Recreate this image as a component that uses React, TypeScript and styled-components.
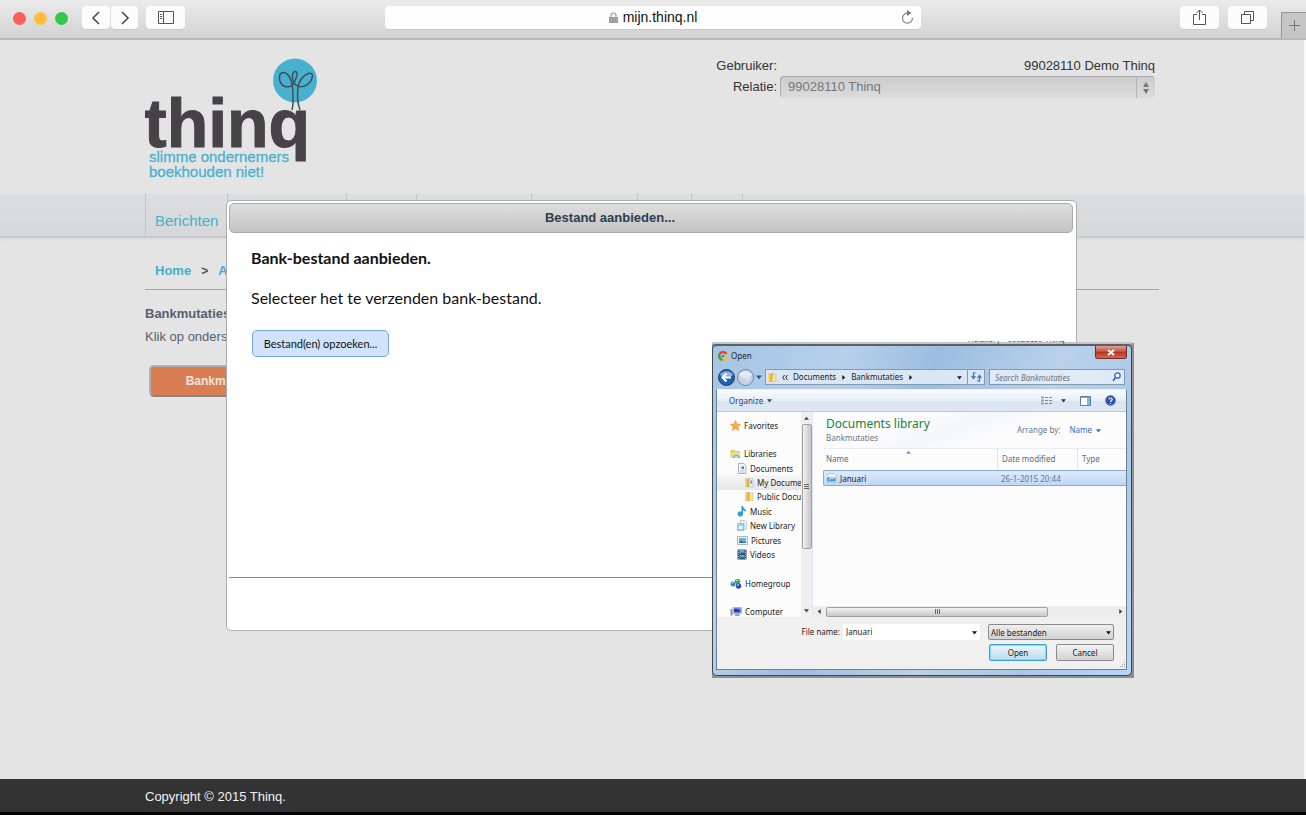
import React from "react";
import styled, { createGlobalStyle } from "styled-components";

const GlobalStyle = createGlobalStyle`
  * { box-sizing: border-box; }
  body { margin: 0; background: #e4e4e4; font-family: "Liberation Sans", Arial, sans-serif; font-size: 13px; color: #333; }
  button, input, select { font: inherit; color: inherit; margin: 0; }
  svg { display: block; flex: none; }
  p, h1, h2, ul { margin: 0; padding: 0; }
  a { text-decoration: none; }
`;

const Screen = styled.div`
  position: relative;
  min-height: 100vh;
  display: flex;
  flex-direction: column;
`;

/* ---------- browser bar ---------- */
const BrowserBar = styled.header`
  height: 40px;
  display: flex;
  align-items: flex-start;
  padding-top: 6px;
  background: linear-gradient(#ebebeb, #d2d2d2);
  border-bottom: 2px solid #b9b9b9;
`;
const BarSide = styled.div<{ $end?: boolean }>`
  flex: 1 1 0;
  display: flex;
  justify-content: ${(p) => (p.$end ? "flex-end" : "flex-start")};
`;
const Lights = styled.div`
  display: flex;
  gap: 8px;
  height: 24px;
  align-items: center;
  margin: 0 14px 0 13px;
`;
const Light = styled.span<{ $color: string }>`
  width: 13px;
  height: 13px;
  border-radius: 50%;
  background: ${(p) => p.$color};
`;
const BarButton = styled.button<{ $w: number; $gap: number }>`
  width: ${(p) => p.$w}px;
  height: 23px;
  margin-right: ${(p) => p.$gap}px;
  padding: 0;
  display: flex;
  align-items: center;
  justify-content: center;
  border: 0;
  border-radius: 4px;
  background: #fcfcfc;
  box-shadow: 0 1px 0 #c9c9c9;
`;
const AddressBar = styled.div`
  flex: 0 1 536px;
  height: 23px;
  display: flex;
  align-items: center;
  border-radius: 4px;
  background: #fdfdfd;
  box-shadow: 0 1px 0 #c9c9c9;
  color: #111;
  padding: 0 7px 0 20px;
`;
const Address = styled.div`
  flex: 1;
  display: flex;
  align-items: center;
  justify-content: center;
  gap: 5px;
  font-size: 14px;
  line-height: 23px;
`;
const IconButton = styled.button`
  display: flex;
  padding: 0;
  border: 0;
  background: none;
`;
const NewTab = styled.button`
  width: 25px;
  height: 26px;
  margin: 6px 0 0 0;
  padding: 0;
  display: flex;
  align-items: center;
  justify-content: center;
  border: 0;
  border-top: 1px solid #969696;
  border-left: 1px solid #969696;
  background: #c6c6c6;
`;

/* ---------- page ---------- */
const Page = styled.div`
  flex: 1;
  background: #e4e4e4;
  border-right: 2px solid #f8f8f8;
`;
const Column = styled.div`
  max-width: 1014px;
  margin: 0 auto;
`;
const Masthead = styled(Column)`
  height: 154px;
  display: flex;
  justify-content: space-between;
  padding: 15px 4px 0 0;
`;
const Account = styled.div`
  display: grid;
  grid-template-columns: auto 375px;
  grid-template-rows: 21px 22px;
  align-content: start;
  column-gap: 3px;
  text-align: right;
  line-height: 22px;
`;
const Relation = styled.div`
  position: relative;
`;
const RelationSelect = styled.select`
  appearance: none;
  display: block;
  width: 100%;
  height: 22px;
  padding: 0 8px;
  border: 0;
  border-radius: 4px;
  background: linear-gradient(#cbcbcb, #dcdcdc);
  box-shadow: inset 1px 1px 1px #ababab;
  color: #777;
`;
const Stepper = styled.span`
  position: absolute;
  top: 1px;
  right: 0;
  width: 19px;
  height: 21px;
  display: flex;
  align-items: center;
  justify-content: center;
  border-left: 1px solid #b4b4b4;
  pointer-events: none;
`;
const Nav = styled.nav`
  height: 44px;
  background: linear-gradient(#dcdedf, #d6d7da);
  border-bottom: 2px solid #c8c9cc;
  box-shadow: 0 1px 2px #d6d6d6;
`;
const NavList = styled.ul`
  display: flex;
  height: 42px;
  list-style: none;
`;
const NavItem = styled.li<{ $w: number }>`
  width: ${(p) => p.$w}px;
  padding: 11px 0 0 9px;
  border-left: 1px solid #c3c5ca;
  font-size: 15px;
  line-height: 32px;
  a { color: #45b2cc; }
`;
const Crumbs = styled.nav`
  height: 52px;
  display: flex;
  gap: 10px;
  padding: 22px 0 0 10px;
  border-bottom: 1px solid #55c2d8;
  font-weight: bold;
  line-height: 22px;
  color: #4a5159;
  a { color: #45aecb; }
  span { font-size: 12px; }
`;
const Intro = styled.div`
  padding-top: 12px;
  line-height: 23px;
  color: #56616e;
`;
const OrangeButton = styled.button`
  width: 152px;
  height: 32px;
  margin: 17px 0 0 4px;
  border: 2px solid #b0b0b0;
  border-bottom-color: #858585;
  border-radius: 5px;
  background: #d97e52;
  color: #eee4df;
  font-size: 12px;
  font-weight: bold;
`;
const Footer = styled.footer`
  height: 36px;
  background: #333;
  border-bottom: 3px solid #000;
  color: #f2f2f2;
  line-height: 36px;
  padding-right: 2px;
`;

/* ---------- upload modal ---------- */
const ModalLayer = styled.div`
  position: absolute;
  top: 200px;
  left: 0;
  right: 3px;
  display: flex;
  justify-content: center;
`;
const Modal = styled.section`
  width: 851px;
  height: 431px;
  padding: 2px 3px 0 2px;
  display: flex;
  flex-direction: column;
  border: 1px solid #adadad;
  border-radius: 5px;
  background: #fff;
  color: #111;
`;
const ModalTitle = styled.h1`
  height: 30px;
  padding-right: 82px;
  border: 1px solid #a9a9a9;
  border-radius: 5px;
  background: linear-gradient(#dedede, #c4c4c4);
  font-size: 13px;
  line-height: 28px;
  text-align: center;
  color: #2c3d50;
`;
const ModalBody = styled.div`
  flex: 1;
  padding: 15px 22px;
  font-family: Lato, sans-serif;
  font-size: 16px;
  line-height: 20px;
  h2 { font-size: 16px; margin-bottom: 20px; }
`;
const PickButton = styled.button`
  width: 137px;
  height: 27px;
  margin: 22px 0 0 1px;
  padding: 0;
  border: 1px solid #7ba6dc;
  border-radius: 5px;
  background: #cfe3fa;
  font-size: 11px;
`;
const ModalFoot = styled.div`
  height: 53px;
  border-top: 1px solid #8e8e8e;
`;

/* ---------- file chooser ---------- */
const ChooserShadow = styled.div`
  position: absolute;
  top: 341px;
  left: calc(50% + 59px);
  width: 422px;
  background: linear-gradient(transparent 2px, #8d8f91 2px);
  padding: 0 2px 2px 0;
  font-family: "Noto Sans", "Open Sans", sans-serif;
  font-size: 8px;
  color: #222;
`;
const BehindText = styled.div`
  height: 3px;
  overflow: hidden;
  display: flex;
  align-items: flex-end;
  gap: 8px;
  padding-left: 256px;
  font: 8px/8px "Liberation Sans", Arial, sans-serif;
  background: linear-gradient(transparent 1px, #c4c4c4 1px);
  color: #444;
`;
const Chooser = styled.section`
  border: 1px solid #3d4852;
  border-top: 2px solid #5a6168;
  border-radius: 5px;
  background: linear-gradient(115deg, #a5c4e4 0%, #b7d0ea 24%, #9dbddf 40%, #b9d1ea 62%, #a9c8e8 80%, #b4d6f8 100%);
  padding: 0 4px 5px 3px;
`;
const Caption = styled.div`
  height: 22px;
  display: flex;
  align-items: flex-start;
  gap: 3px;
  padding-left: 2px;
  line-height: 20px;
  svg { margin-top: 5px; }
  strong { flex: 1; font-weight: normal; }
`;
const CloseButton = styled.button`
  width: 32px;
  height: 13px;
  padding: 0;
  display: flex;
  align-items: center;
  justify-content: center;
  border: 1px solid #6e2c26;
  border-top: 0;
  border-radius: 0 0 3px 3px;
  background: linear-gradient(#dfa093, #c75642 45%, #b8311c 50%, #d06a50);
  && svg { margin: 0; }
`;
const PathRow = styled.div`
  height: 21px;
  display: flex;
  align-items: flex-start;
  gap: 2px;
  padding: 0 2px;
`;
const RoundNav = styled.div`
  display: flex;
  align-items: center;
  gap: 2px;
  height: 18px;
  width: 45px;
`;
const PathBox = styled.div`
  flex: 1;
  height: 16px;
  margin-top: 1px;
  display: flex;
  align-items: center;
  gap: 5px;
  padding-left: 1px;
  border: 1px solid #8499b0;
  background: #d9e6f4;
  > button:last-child { width: 17px; height: 14px; align-items: center; justify-content: center; border-left: 1px solid #8499b0; }
`;
const Spacer = styled.span`
  flex: 1;
`;
const SearchBox = styled.label`
  width: 136px;
  height: 16px;
  margin: 1px 0 0 2px;
  display: flex;
  align-items: center;
  padding: 0 3px 0 5px;
  border: 1px solid #8499b0;
  background: #dfeaf6;
`;
const BareInput = styled.input`
  flex: 1;
  min-width: 0;
  width: 0;
  height: 14px;
  padding: 0;
  border: 0;
  background: none;
  outline: 0;
  &::placeholder { color: #6c7580; font-style: italic; opacity: 1; }
`;
const Client = styled.div`
  border: 1px solid #6d8096;
  border-top-color: #e9f1fa;
  background: #f0f0f0;
`;
const Tools = styled.div`
  height: 22px;
  display: flex;
  align-items: center;
  gap: 14px;
  padding: 0 10px 0 12px;
  border-bottom: 1px solid #b9c8dc;
  background: linear-gradient(#fafcfe, #e6eef8 50%, #d9e4f1 55%, #dfe8f4);
  color: #2b4668;
`;
const TextButton = styled.button`
  display: flex;
  align-items: center;
  gap: 4px;
  padding: 0;
  border: 0;
  background: none;
  line-height: 14px;
`;
const Panes = styled.div`
  height: 205px;
  display: flex;
  background: #fcfcfd;
`;
const Tree = styled.ul`
  width: 84px;
  height: 205px;
  overflow: hidden;
  padding-top: 6px;
  list-style: none;
`;
const TreeGrid = styled.div`
  height: 201px;
  display: grid;
  grid-template-rows: repeat(14, 1fr);
`;
const TreeRow = styled.li<{ $level: number; $row: number; $on?: boolean }>`
  grid-row: ${(p) => p.$row};
  display: flex;
  align-items: center;
  gap: 3px;
  padding-left: ${(p) => 13 + p.$level * 7}px;
  white-space: nowrap;
  overflow: hidden;
  background: ${(p) => (p.$on ? "linear-gradient(#f6f6f6, #e6e6e6)" : "none")};
`;
const VScroll = styled.div`
  width: 12px;
  display: flex;
  flex-direction: column;
  align-items: center;
  justify-content: space-between;
  padding: 4px 0;
  background: #efefef;
  border-right: 1px solid #dbe7f5;
`;
const VThumb = styled.span`
  width: 10px;
  height: 125px;
  margin: 3px 0 auto;
  display: flex;
  align-items: center;
  justify-content: center;
  border: 1px solid #a0a0a0;
  border-radius: 2px;
  background: linear-gradient(90deg, #f2f2f2, #c4c4c4);
`;
const Listing = styled.div`
  flex: 1;
  display: flex;
  flex-direction: column;
  min-width: 0;
`;
const LibraryHead = styled.div`
  height: 36px;
  display: flex;
  justify-content: space-between;
  padding: 4px 25px 0 13px;
  background: linear-gradient(160deg, #fcfcfd 30%, #f3f6fb 45%, #fcfcfd 60%);
  color: #6a7684;
  h2 { font-size: 12px; line-height: 16px; font-weight: normal; color: #21803a; }
  p { line-height: 11px; }
`;
const Arrange = styled.div`
  display: flex;
  align-items: flex-start;
  gap: 9px;
  padding-top: 7px;
  line-height: 14px;
  button { color: #2672c8; }
`;
const Files = styled.table`
  width: calc(100% - 10px);
  margin-left: 10px;
  table-layout: fixed;
  border-collapse: separate;
  border-spacing: 0;
  color: #6b7583;
  th { position: relative; height: 22px; padding: 0 0 3px 4px; text-align: left; font-weight: normal; color: #5b6b80; border-top: 1px solid #e6edf5; }
  th + th { border-left: 1px solid #dde6f0; }
  th:first-child, td:first-child { padding-left: 3px; }
  td { height: 16px; padding: 0 0 0 4px; border: solid #86aadb; border-width: 1px 0; background: linear-gradient(#dfeafb, #bfd7f8); }
  td:first-child { border-left-width: 1px; border-radius: 2px 0 0 2px; }
  th:first-child svg { position: absolute; top: 1px; left: 83px; }
`;
const FileCell = styled.span`
  display: flex;
  align-items: center;
  gap: 3px;
  color: #222;
`;
const HScroll = styled.div`
  height: 11px;
  margin-top: auto;
  display: flex;
  align-items: center;
  padding: 0 3px 0 4px;
  background: #ededed;
`;
const HThumb = styled.span`
  width: 222px;
  height: 10px;
  margin: 0 auto 0 4px;
  display: flex;
  align-items: center;
  justify-content: center;
  border: 1px solid #a0a0a0;
  border-radius: 2px;
  background: linear-gradient(#f2f2f2, #c8c8c8);
`;
const NameForm = styled.form`
  height: 52px;
  display: grid;
  grid-template-columns: 1fr 137px 134px;
  grid-template-rows: 16px 18px;
  row-gap: 4px;
  padding: 7px 12px 0 0;
  line-height: 16px;
  label { text-align: right; padding-right: 3px; }
`;
const NameBox = styled.div`
  display: flex;
  align-items: center;
  padding: 0 3px;
  background: #fff;
`;
const TypePick = styled.div`
  position: relative;
  margin-left: 8px;
  svg { position: absolute; top: 6px; right: 3px; pointer-events: none; }
`;
const TypeSelect = styled.select`
  appearance: none;
  display: block;
  width: 100%;
  height: 16px;
  padding: 0 2px;
  border: 1px solid #8a8a8a;
  border-radius: 2px;
  background: linear-gradient(#efefef, #d2d2d2);
`;
const Actions = styled.div`
  grid-column: 3;
  display: flex;
  justify-content: flex-end;
  gap: 9px;
`;
const DialogButton = styled.button<{ $primary?: boolean }>`
  flex: 0 0 58px;
  height: 17px;
  padding: 0;
  line-height: 13px;
  border: 1px solid ${(p) => (p.$primary ? "#3aa5d1" : "#8a8a8a")};
  border-radius: 2px;
  box-shadow: ${(p) => (p.$primary ? "inset 0 0 0 1px #7fd6f5" : "none")};
  background: ${(p) => (p.$primary ? "linear-gradient(#eaf5fb, #bddcee)" : "linear-gradient(#f2f2f2, #d2d2d2)")};
`;

/* ---------- drawings ---------- */
const Caret = ({ dir = "down", color = "#222", size = 5 }: { dir?: "down" | "up" | "left" | "right"; color?: string; size?: number }) => {
  const d = { down: "M0 2h8L4 7z", up: "M0 6h8L4 1z", left: "M6 0v8L1 4z", right: "M2 0v8l5-4z" }[dir];
  return (
    <svg width={size} height={size} viewBox="0 0 8 8" aria-hidden="true">
      <path d={d} fill={color} />
    </svg>
  );
};

const Logo = () => (
  <svg width="176" height="126" viewBox="0 0 176 126" role="img" aria-label="thinq">
    <circle cx="150" cy="25.500" r="22" fill="#49b1d0" />
    <text x="-1" y="92" fontFamily="Liberation Sans" fontSize="68" fontWeight="bold" fill="#454346" stroke="#454346" strokeWidth="1">thinq</text>
    <text x="4" y="107" fontFamily="Liberation Sans" fontSize="15" fill="#49b1d0" stroke="#49b1d0" strokeWidth="0.300">slimme ondernemers</text>
    <text x="4" y="122" fontFamily="Liberation Sans" fontSize="15" fill="#49b1d0" stroke="#49b1d0" strokeWidth="0.300">boekhouden niet!</text>
    <path
      d="M147 55C149 46 148 38 147.500 31C146 22 142 17 138 17.500C133 18 133.500 27 138 30.500C142 33 148 32 149.500 27C152 22 153 16.500 150.500 16.500C147 16.500 146.500 23 149 28C153 33 160 33 165 27C169 21 168 17.500 163.500 18.500C158 20 154 26 153 32C152 40 152 47 155 55"
      fill="none"
      stroke="#3d5059"
      strokeWidth="1.500"
    />
  </svg>
);

const ChromeIcon = () => (
  <svg width="10" height="10" viewBox="0 0 20 20">
    <circle cx="10" cy="10" r="10" fill="#f2c12e" />
    <path d="M10 10 1.300 5A10 10 0 0 1 18.700 5z" fill="#d9402f" />
    <path d="M10 10 1.300 5A10 10 0 0 0 9 20z" fill="#3f9e48" />
    <circle cx="10" cy="10" r="4.800" fill="#fff" />
    <circle cx="10" cy="10" r="3.700" fill="#4a7fd0" />
  </svg>
);
const FolderIcon = () => (
  <svg width="10" height="11" viewBox="0 0 20 22">
    <path d="M2 2h8v18H2z" fill="#f1d27a" />
    <path d="M6 5l6-4v17l-6 3z" fill="#e3b44a" />
    <path d="M11 4h7v15h-8z" fill="#f7e3a0" stroke="#d6ae50" />
  </svg>
);
const LibraryIcon = () => (
  <svg width="11" height="10" viewBox="0 0 22 20">
    <path d="M1 2h8l2 2h9v13H1z" fill="#e9c765" />
    <path d="M3 6h17v12H3z" fill="#f2d98a" />
    <path d="M6 18c0-8 13-8 15 0z" fill="#4fb0d8" />
    <path d="M9 18h8v-4H9z" fill="#a9def0" />
  </svg>
);
const DocIcon = ({ mark = "#3e78c0" }: { mark?: string }) => (
  <svg width="10" height="11" viewBox="0 0 20 22">
    <path d="M3 1h11l4 4v16H3z" fill="#f1f5fa" stroke="#8b9bb0" strokeWidth="1.500" />
    <path d="M9 7h5v5H9z" fill={mark} />
    <path d="M6 15h9M6 18h9" stroke="#b7c5d6" strokeWidth="1.500" />
  </svg>
);
const MyDocIcon = () => (
  <svg width="10" height="11" viewBox="0 0 20 22">
    <path d="M2 2h8v18H2z" fill="#f0cd6d" />
    <path d="M9 3h9v17H9z" fill="#e4edf5" stroke="#9eb0c4" />
    <path d="M6 5l5-3v17l-5 2z" fill="#d9b052" />
    <path d="M13 7h3v6h-3z" fill="#5b93cb" />
  </svg>
);
const StarIcon = () => (
  <svg width="11" height="11" viewBox="0 0 22 22">
    <path d="M11 1l3 7 7 .6-5.300 5 1.600 7.400L11 17l-6.300 4 1.600-7.400L1 8.600 8 8z" fill="#f9b03c" stroke="#e0852a" />
  </svg>
);
const MusicIcon = () => (
  <svg width="10" height="11" viewBox="0 0 20 22">
    <path d="M9 0h3c0 5 7 6 6 13-1-3-4-4-6-4v7a5.500 5 0 1 1-3-4.500z" fill="#2f9bdc" />
  </svg>
);
const NewLibIcon = () => (
  <svg width="10" height="11" viewBox="0 0 20 22">
    <path d="M6 1h10l3 3v14H6z" fill="#e8f1f9" stroke="#8fa9c4" />
    <path d="M1 7h13v14H1z" fill="#a9cdec" stroke="#6c9fd0" />
    <path d="M4 12h7v6H4z" fill="#e9f5fd" />
  </svg>
);
const PictureIcon = () => (
  <svg width="11" height="9" viewBox="0 0 22 18">
    <path d="M1 1h20v16H1z" fill="#eef3f7" stroke="#92a2b0" strokeWidth="1.500" />
    <path d="M4 4h14v10H4z" fill="#5fb4dc" />
    <path d="M4 14c3-6 6-4 8-2s4-1 6-1v3z" fill="#286a70" />
  </svg>
);
const VideoIcon = () => (
  <svg width="10" height="11" viewBox="0 0 20 22">
    <path d="M1 1h18v20H1z" fill="#3a4552" />
    <path d="M5 2h10v8H5zM5 12h10v8H5z" fill="#53b2e3" />
    <path d="M8 10V5l4 3 3-2v4zM6 20v-5l6 2 3-2v5z" fill="#27618f" />
    <path d="M3 2v19M17 2v19" stroke="#ccd5dd" strokeWidth="1.500" strokeDasharray="2 2" />
  </svg>
);
const HomegroupIcon = () => (
  <svg width="12" height="11" viewBox="0 0 24 22">
    <circle cx="6" cy="12" r="5" fill="#3d83c9" />
    <circle cx="15" cy="7" r="5.500" fill="#48a850" />
    <circle cx="17" cy="16" r="5.500" fill="#2753b4" />
    <path d="M12 5l4-1M4 11l3-2M14 15l4-2" stroke="#d7ecf8" strokeWidth="2" />
  </svg>
);
const ComputerIcon = () => (
  <svg width="12" height="10" viewBox="0 0 24 20">
    <path d="M1 4h4v13H1z" fill="#8d9690" />
    <path d="M6 1h17v12H6z" fill="#cfd6de" stroke="#78838f" />
    <path d="M8 3h13v8H8z" fill="#1d3bc0" />
    <path d="M14 3h7v5z" fill="#6d8bea" />
    <path d="M11 14h7l2 4H9z" fill="#9aa5b1" />
  </svg>
);
const Grip = ({ vertical }: { vertical?: boolean }) => (
  <svg width="5" height="5" viewBox="0 0 5 5">
    <path d={vertical ? "M.5 0v5M2.500 0v5M4.500 0v5" : "M0 .5h5M0 2.500h5M0 4.500h5"} stroke="#666" strokeWidth="1" />
  </svg>
);
const SizeGrip = styled.span`
  position: absolute;
  right: 8px;
  bottom: 10px;
`;

const tree = [
  { label: "Favorites", row: 1, level: 0, icon: <StarIcon /> },
  { label: "Libraries", row: 3, level: 0, icon: <LibraryIcon /> },
  { label: "Documents", row: 4, level: 1, icon: <DocIcon /> },
  { label: "My Docume", row: 5, level: 2, icon: <MyDocIcon />, on: true },
  { label: "Public Docu", row: 6, level: 2, icon: <FolderIcon /> },
  { label: "Music", row: 7, level: 1, icon: <MusicIcon /> },
  { label: "New Library", row: 8, level: 1, icon: <NewLibIcon /> },
  { label: "Pictures", row: 9, level: 1, icon: <PictureIcon /> },
  { label: "Videos", row: 10, level: 1, icon: <VideoIcon /> },
  { label: "Homegroup", row: 12, level: 0, icon: <HomegroupIcon /> },
  { label: "Computer", row: 14, level: 0, icon: <ComputerIcon /> },
];

const navWidths = [119, 70, 115, 106, 54, 51];

const Browser = () => (
  <BrowserBar>
    <BarSide>
      <Lights>
        <Light $color="#fc5f5b" />
        <Light $color="#fdbd41" />
        <Light $color="#33c748" />
      </Lights>
      <BarButton $w={28} $gap={1} aria-label="Vorige">
        <svg width="10" height="14" viewBox="0 0 10 14"><path d="M8 1 2 7l6 6" fill="none" stroke="#444" strokeWidth="1.500" /></svg>
      </BarButton>
      <BarButton $w={27} $gap={8} aria-label="Volgende">
        <svg width="10" height="14" viewBox="0 0 10 14"><path d="m2 1 6 6-6 6" fill="none" stroke="#444" strokeWidth="1.500" /></svg>
      </BarButton>
      <BarButton $w={39} $gap={0} aria-label="Zijbalk">
        <svg width="16" height="13" viewBox="0 0 16 13">
          <path d="M.5.5h15v12H.5zM5.500.5v12M2 3.500h2M2 5.500h2M2 7.500h2" fill="none" stroke="#555" />
        </svg>
      </BarButton>
    </BarSide>
    <AddressBar>
      <Address>
        <svg width="9" height="11" viewBox="0 0 9 11">
          <path d="M2 5V3.500a2.500 2.500 0 0 1 5 0V5" fill="none" stroke="#a0a0a0" strokeWidth="1.200" />
          <path d="M0 5h9v6H0z" fill="#a0a0a0" />
        </svg>
        mijn.thinq.nl
      </Address>
      <IconButton aria-label="Vernieuwen">
        <svg width="13" height="15" viewBox="0 0 13 15">
          <path d="M7 3.200A5 5 0 1 0 11.500 8" fill="none" stroke="#858585" strokeWidth="1.200" />
          <path d="M6 0v6l4.500-3z" fill="#777" />
        </svg>
      </IconButton>
    </AddressBar>
    <BarSide $end>
      <BarButton $w={39} $gap={9} aria-label="Delen">
        <svg width="13" height="17" viewBox="0 0 13 17">
          <path d="M4 5.500H.5v10h12v-10H9M6.500 11V1M3.500 4l3-3 3 3" fill="none" stroke="#555" />
        </svg>
      </BarButton>
      <BarButton $w={39} $gap={14} aria-label="Tabbladen">
        <svg width="13" height="13" viewBox="0 0 13 13">
          <path d="M.5 3.500h9v9h-9zM3.500 3V.5h9v9H10" fill="none" stroke="#555" />
        </svg>
      </BarButton>
      <NewTab aria-label="Nieuw tabblad">
        <svg width="11" height="11" viewBox="0 0 11 11"><path d="M5.500 0v11M0 5.500h11" stroke="#777" /></svg>
      </NewTab>
    </BarSide>
  </BrowserBar>
);

const FileChooser = () => (
  <ChooserShadow>
    <BehindText><span>Relatie: |</span><span>99028110 Thinq</span></BehindText>
    <Chooser aria-label="Open">
      <Caption>
        <ChromeIcon />
        <strong>Open</strong>
        <CloseButton aria-label="Sluiten">
          <svg width="8" height="7" viewBox="0 0 8 7"><path d="m1 1 6 5M7 1 1 6" stroke="#fff" strokeWidth="2" /></svg>
        </CloseButton>
      </Caption>
      <PathRow>
        <RoundNav>
          <IconButton aria-label="Terug">
            <svg width="17" height="17" viewBox="0 0 17 17">
              <circle cx="8.500" cy="8.500" r="8" fill="#1f5fb4" stroke="#234067" />
              <path d="M2 6a7 6 0 0 1 13 0c-4 3-9 3-13 0z" fill="#88b3e2" />
              <path d="M13 8.500H5M8.500 4.500l-4 4 4 4" fill="none" stroke="#fff" strokeWidth="2.200" />
            </svg>
          </IconButton>
          <IconButton aria-label="Vooruit">
            <svg width="17" height="17" viewBox="0 0 17 17">
              <circle cx="8.500" cy="8.500" r="8" fill="#c3d3e4" stroke="#6f8499" />
              <path d="M2 6a7 6 0 0 1 13 0c-4 3-9 3-13 0z" fill="#e3ecf5" />
              <path d="M4 8.500h8M9 5l3.500 3.500L9 12" fill="none" stroke="#dfe8f2" strokeWidth="1.500" />
            </svg>
          </IconButton>
          <Caret color="#1e5e9e" size={6} />
        </RoundNav>
        <PathBox>
          <FolderIcon />
          <svg width="6" height="5" viewBox="0 0 6 5"><path d="M2.500 0 .7 2.500l1.800 2.500M5.500 0 3.700 2.500 5.500 5" fill="none" stroke="#222" /></svg>
          <TextButton>Documents</TextButton>
          <Caret dir="right" />
          <TextButton>Bankmutaties</TextButton>
          <Caret dir="right" />
          <Spacer />
          <Caret color="#151b60" />
          <IconButton aria-label="Vernieuwen">
            <svg width="11" height="10" viewBox="0 0 11 10">
              <path d="M4.500 1h-2v5M.5 4l2 2.500 2-2.500M6 9h2.500V4M6.500 6l2-2.500 2 2.500" fill="none" stroke="#2a72bb" strokeWidth="1.200" />
            </svg>
          </IconButton>
        </PathBox>
        <SearchBox>
          <BareInput placeholder="Search Bankmutaties" aria-label="Search Bankmutaties" />
          <svg width="9" height="10" viewBox="0 0 9 10">
            <circle cx="5.500" cy="3.500" r="2.700" fill="#eef6ff" stroke="#2d6cb5" strokeWidth="1.300" />
            <path d="M3.500 5.500 1 9" stroke="#2d6cb5" strokeWidth="1.600" />
          </svg>
        </SearchBox>
      </PathRow>
      <Client>
        <Tools>
          <TextButton>Organize <Caret color="#2b4668" /></TextButton>
          <Spacer />
          <TextButton aria-label="Weergave">
            <svg width="12" height="9" viewBox="0 0 12 9">
              <path d="M0 1.500h3M0 4.500h3M0 7.500h3" stroke="#9aa6b4" strokeWidth="2" />
              <path d="M4 1.500h7M4 4.500h7M4 7.500h7" stroke="#7d8896" strokeDasharray="3 1" />
            </svg>
            <Spacer />
            <Caret color="#25375a" />
          </TextButton>
          <IconButton aria-label="Voorbeeldvenster">
            <svg width="11" height="10" viewBox="0 0 11 10">
              <path d="M.5.5h10v9H.5z" fill="#fff" stroke="#5f7d96" />
              <path d="M7 1h3v8H7z" fill="#6fc0d8" />
              <path d="M1 1.500h9" stroke="#8aa6bc" />
            </svg>
          </IconButton>
          <IconButton aria-label="Help">
            <svg width="11" height="11" viewBox="0 0 11 11">
              <circle cx="5.500" cy="5.500" r="5" fill="#2b4fae" stroke="#7d8ca8" />
              <path d="M4 4.500c0-2 3.200-2 3.200 0C7.200 5.500 5.500 5.500 5.500 7M5.500 8v1" fill="none" stroke="#fff" strokeWidth="1.200" />
            </svg>
          </IconButton>
        </Tools>
        <Panes>
          <Tree>
            <TreeGrid>
              {tree.map((t) => (
                <TreeRow key={t.label} $row={t.row} $level={t.level} $on={t.on}>
                  {t.icon}
                  {t.label}
                </TreeRow>
              ))}
            </TreeGrid>
          </Tree>
          <VScroll>
            <Caret dir="up" color="#444" />
            <VThumb><Grip /></VThumb>
            <Caret color="#444" />
          </VScroll>
          <Listing>
            <LibraryHead>
              <div>
                <h2>Documents library</h2>
                <p>Bankmutaties</p>
              </div>
              <Arrange>
                Arrange by:
                <TextButton>Name <Caret color="#2672c8" /></TextButton>
              </Arrange>
            </LibraryHead>
            <Files>
              <colgroup>
                <col />
                <col width="80" />
                <col width="49" />
              </colgroup>
              <thead>
                <tr>
                  <th>Name<Caret dir="up" color="#6f9fbd" /></th>
                  <th>Date modified</th>
                  <th>Type</th>
                </tr>
              </thead>
              <tbody>
                <tr>
                  <td>
                    <FileCell>
                      <svg width="10" height="10" viewBox="0 0 20 20">
                        <path d="M2 1h12l4 4v14H2z" fill="#f4f8fb" stroke="#93a7b8" />
                        <path d="M0 9h17v8H0z" fill="#3f9fcb" />
                        <path d="M2 15c4-5 8-3 13-5" fill="none" stroke="#d4eef8" strokeWidth="2" />
                      </svg>
                      Januari
                    </FileCell>
                  </td>
                  <td>26-1-2015 20:44</td>
                  <td />
                </tr>
              </tbody>
            </Files>
            <HScroll>
              <Caret dir="left" color="#444" />
              <HThumb><Grip vertical /></HThumb>
              <Caret dir="right" color="#444" />
            </HScroll>
          </Listing>
        </Panes>
        <NameForm onSubmit={(e) => e.preventDefault()}>
          <label htmlFor="file-name">File name:</label>
          <NameBox>
            <BareInput id="file-name" defaultValue="Januari" />
            <Caret color="#111" />
          </NameBox>
          <TypePick>
            <TypeSelect aria-label="Bestandstype">
              <option>Alle bestanden</option>
            </TypeSelect>
            <Caret color="#111" />
          </TypePick>
          <Actions>
            <DialogButton $primary>Open</DialogButton>
            <DialogButton type="button">Cancel</DialogButton>
          </Actions>
        </NameForm>
      </Client>
    </Chooser>
    <SizeGrip>
      <svg width="6" height="6" viewBox="0 0 6 6"><path d="M4 0h1v1H4zM2 2h1v1H2zM4 2h1v1H4zM0 4h1v1H0zM2 4h1v1H2zM4 4h1v1H4z" fill="#a9a9a9" /></svg>
    </SizeGrip>
  </ChooserShadow>
);

export default function App() {
  return (
    <>
      <GlobalStyle />
      <Screen>
        <Browser />
        <Page>
          <Masthead>
            <Logo />
            <Account>
              <span>Gebruiker:</span>
              <span>99028110 Demo Thinq</span>
              <label htmlFor="relation">Relatie:</label>
              <Relation>
                <RelationSelect id="relation">
                  <option>99028110 Thinq</option>
                </RelationSelect>
                <Stepper>
                  <svg width="6" height="12" viewBox="0 0 6 12"><path d="M0 5h6L3 0zM0 7h6l-3 5z" fill="#777" /></svg>
                </Stepper>
              </Relation>
            </Account>
          </Masthead>
          <Nav>
            <Column>
              <NavList>
                <NavItem $w={82}><a href="#berichten">Berichten</a></NavItem>
                {navWidths.map((w, i) => <NavItem key={i} $w={w} />)}
                <NavItem $w={100} />
              </NavList>
            </Column>
          </Nav>
          <Column>
            <Crumbs>
              <a href="#home">Home</a>
              <span>&gt;</span>
              <a href="#a">A</a>
            </Crumbs>
            <Intro>
              <p><b>Bankmutaties</b></p>
              <p>Klik op onderst</p>
            </Intro>
            <OrangeButton>Bankmutaties</OrangeButton>
          </Column>
        </Page>
        <Footer>
          <Column>Copyright © 2015 Thinq.</Column>
        </Footer>
        <ModalLayer>
          <Modal>
            <ModalTitle>Bestand aanbieden...</ModalTitle>
            <ModalBody>
              <h2>Bank-bestand aanbieden.</h2>
              <p>Selecteer het te verzenden bank-bestand.</p>
              <PickButton>Bestand(en) opzoeken...</PickButton>
            </ModalBody>
            <ModalFoot />
          </Modal>
        </ModalLayer>
        <FileChooser />
      </Screen>
    </>
  );
}
